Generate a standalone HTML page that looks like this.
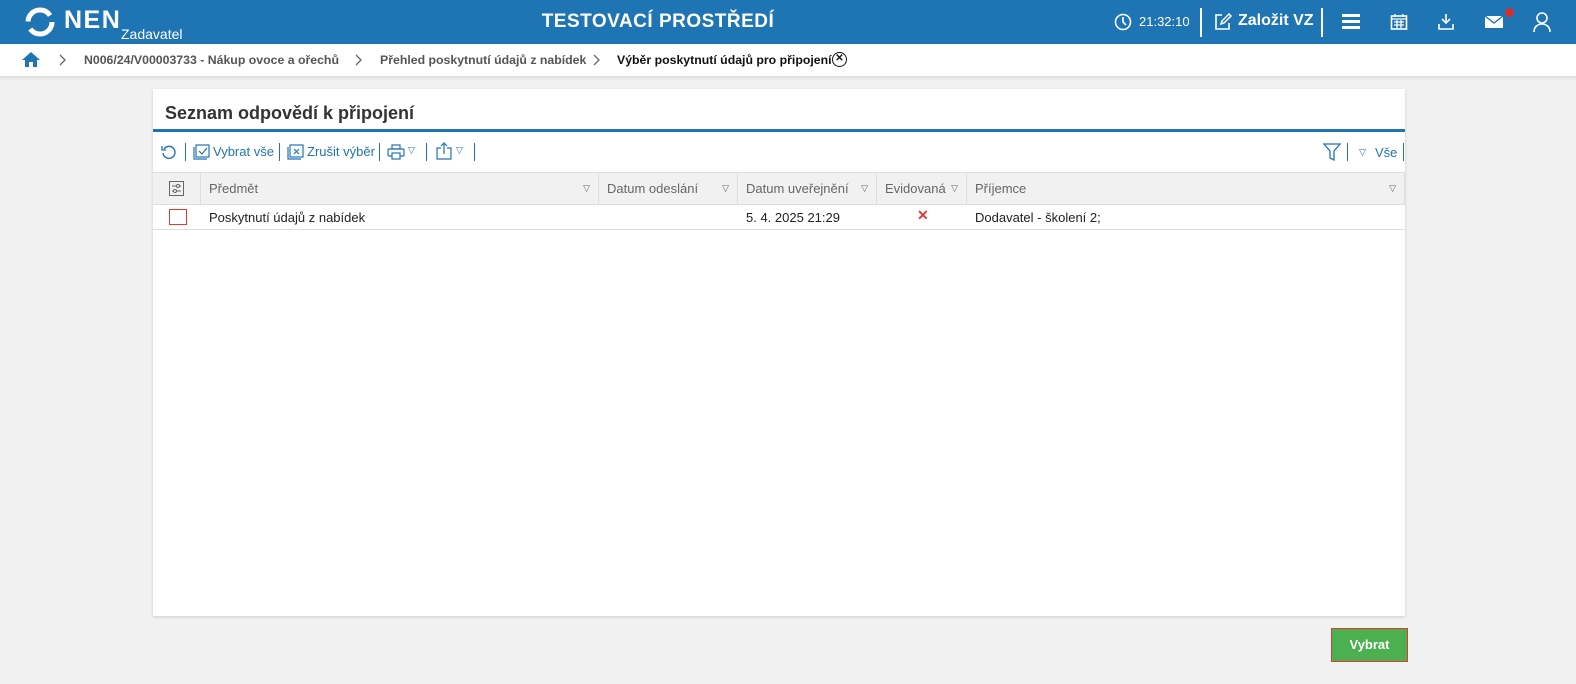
<!DOCTYPE html>
<html><head><meta charset="utf-8"><style>
*{box-sizing:border-box;margin:0;padding:0}
body{width:1576px;height:684px;background:#f1f1f1;font-family:"Liberation Sans",Arial,sans-serif;position:relative;overflow:hidden;font-size:13px;color:#222}
.top{position:absolute;left:0;top:0;width:1576px;height:44px;background:#1f75b4;color:#fff}
.bc{position:absolute;left:0;top:44px;width:1576px;height:32px;background:#fff;box-shadow:0 2px 3px rgba(0,0,0,.1);font-size:12.3px;font-weight:bold;color:#555}
.abs{position:absolute}
.panel{position:absolute;left:153px;top:89px;width:1252px;height:527px;background:#fff;box-shadow:0 1px 3px rgba(0,0,0,.15)}
.tb{color:#1f75b4;font-size:13px}
.sep{position:absolute;width:1px;height:18px;background:#1f75b4}
.th{position:absolute;top:83px;height:33px;background:#f1f1f1;border-right:1px solid #ddd;border-top:1px solid #ddd;border-bottom:1px solid #ddd;color:#666;font-size:13px;line-height:31px;padding-left:8px}
.tri{position:absolute;right:8px;top:0;font-size:9px;color:#666}
</style></head><body>
<div class="top">
 <svg class="abs" style="left:24px;top:7px" width="32" height="30" viewBox="0 0 32 30"><circle cx="16" cy="15" r="12" fill="none" stroke="#fff" stroke-width="5" stroke-dasharray="30 8"/></svg>
 <div class="abs" style="left:64px;top:6px;font-size:25px;font-weight:bold;letter-spacing:1.5px">NEN</div>
 <div class="abs" style="left:121px;top:26px;font-size:14px">Zadavatel</div>
 <div class="abs" style="left:0;width:1316px;text-align:center;top:11px;font-size:19px;font-weight:bold;letter-spacing:.5px">TESTOVACÍ PROSTŘEDÍ</div>
 <svg class="abs" style="left:1114px;top:13px" width="18" height="18" viewBox="0 0 18 18"><circle cx="9" cy="9" r="7.5" fill="none" stroke="#fff" stroke-width="1.6"/><path d="M9 4v5l3 3" fill="none" stroke="#fff" stroke-width="1.6"/></svg>
 <div class="abs" style="left:1139px;top:14px;font-size:13px">21:32:10</div>
 <div class="abs" style="left:1200px;top:8px;width:2px;height:29px;background:#fff"></div>
 <svg class="abs" style="left:1213px;top:12px" width="20" height="20" viewBox="0 0 20 20"><path d="M9 3H3v14h13v-6" fill="none" stroke="#fff" stroke-width="1.6"/><path d="M8 12l1-3 7-7 2 2-7 7z" fill="none" stroke="#fff" stroke-width="1.5"/></svg>
 <div class="abs" style="left:1238px;top:12px;font-size:16px;font-weight:bold">Založit VZ</div>
 <div class="abs" style="left:1321px;top:8px;width:2px;height:29px;background:#fff"></div>
 <div class="abs" style="left:1342px;top:14px;width:18px;height:3px;background:#fff;box-shadow:0 6px 0 #fff,0 12px 0 #fff"></div>
 <svg class="abs" style="left:1390px;top:13px" width="18" height="18" viewBox="0 0 18 18"><rect x="1.5" y="3" width="15" height="13" fill="none" stroke="#fff" stroke-width="1.6"/><path d="M1.5 6h15M5 1v3M13 1v3M4 9h10M4 12h10M7 7v8M11 7v8" stroke="#fff" stroke-width="1.3"/></svg>
 <svg class="abs" style="left:1437px;top:12px" width="18" height="20" viewBox="0 0 18 20"><path d="M9 2v9M5 7l4 4 4-4M2 12v5h14v-5" fill="none" stroke="#fff" stroke-width="1.6"/></svg>
 <svg class="abs" style="left:1485px;top:15px" width="18" height="14" viewBox="0 0 18 14"><rect x="0" y="1" width="18" height="12" fill="#fff"/><path d="M0 1l9 7 9-7" fill="none" stroke="#1f75b4" stroke-width="1.4"/></svg>
 <div class="abs" style="left:1505px;top:8px;width:9px;height:9px;border-radius:50%;background:#d32f2f"></div>
 <svg class="abs" style="left:1533px;top:11px" width="18" height="22" viewBox="0 0 18 22"><circle cx="9" cy="7" r="5" fill="none" stroke="#fff" stroke-width="1.6"/><path d="M1 21c0-5 3.5-8 8-8s8 3 8 8" fill="none" stroke="#fff" stroke-width="1.6"/></svg>
</div>
<div class="bc">
 <svg class="abs" style="left:22px;top:7px" width="18" height="17" viewBox="0 0 18 17"><path d="M9 1L0 9h3v7h4v-5h4v5h4V9h3z" fill="#1f75b4"/></svg>
 <svg class="abs" style="left:59px;top:10px" width="8" height="12" viewBox="0 0 8 12"><path d="M1 1l5 5-5 5" fill="none" stroke="#666" stroke-width="1.3"/></svg>
 <div class="abs" style="left:84px;top:9px;white-space:nowrap">N006/24/V00003733 - Nákup ovoce a ořechů</div>
 <svg class="abs" style="left:355px;top:10px" width="8" height="12" viewBox="0 0 8 12"><path d="M1 1l5 5-5 5" fill="none" stroke="#666" stroke-width="1.3"/></svg>
 <div class="abs" style="left:380px;top:9px;white-space:nowrap">Přehled poskytnutí údajů z nabídek</div>
 <svg class="abs" style="left:593px;top:10px" width="8" height="12" viewBox="0 0 8 12"><path d="M1 1l5 5-5 5" fill="none" stroke="#666" stroke-width="1.3"/></svg>
 <div class="abs" style="left:617px;top:9px;color:#111;white-space:nowrap">Výběr poskytnutí údajů pro připojení</div>
 <div class="abs" style="left:832px;top:8px;width:15px;height:15px;border:1.5px solid #111;border-radius:50%;font-size:10px;line-height:12px;text-align:center;color:#111">✕</div>
</div>
<div class="panel">
 <div class="abs" style="left:12px;top:14px;font-size:18px;font-weight:bold;color:#333">Seznam odpovědí k připojení</div>
 <div class="abs" style="left:0;top:40px;width:1252px;height:3px;background:#1f75b4"></div>
 <div class="tb">
  <svg class="abs" style="left:8px;top:55px" width="16" height="16" viewBox="0 0 16 16"><path d="M3 5A6 6 0 1 1 2 9" fill="none" stroke="#1f75b4" stroke-width="1.4"/><path d="M1 2v4h4" fill="none" stroke="#1f75b4" stroke-width="1.3"/></svg>
  <div class="sep" style="left:32px;top:54px"></div>
  <svg class="abs" style="left:40px;top:55px" width="17" height="16" viewBox="0 0 17 16"><rect x="3" y="1" width="13" height="12" fill="none" stroke="#1f75b4" stroke-width="1.2"/><path d="M1 3v12h13" fill="none" stroke="#1f75b4" stroke-width="1.2"/><path d="M6 7l3 3 5-6" fill="none" stroke="#1f75b4" stroke-width="1.2"/></svg>
  <div class="abs" style="left:60px;top:55px">Vybrat vše</div>
  <div class="sep" style="left:126px;top:54px"></div>
  <svg class="abs" style="left:134px;top:55px" width="17" height="16" viewBox="0 0 17 16"><rect x="3" y="1" width="13" height="12" fill="none" stroke="#1f75b4" stroke-width="1.2"/><path d="M1 3v12h13" fill="none" stroke="#1f75b4" stroke-width="1.2"/><path d="M7 5l5 5M12 5l-5 5" stroke="#1f75b4" stroke-width="1.2"/></svg>
  <div class="abs" style="left:154px;top:55px">Zrušit výběr</div>
  <div class="sep" style="left:226px;top:54px"></div>
  <svg class="abs" style="left:234px;top:55px" width="18" height="16" viewBox="0 0 18 16"><rect x="5" y="1" width="8" height="4" fill="none" stroke="#1f75b4" stroke-width="1.2"/><rect x="1" y="5" width="16" height="7" rx="1" fill="none" stroke="#1f75b4" stroke-width="1.2"/><rect x="5" y="9" width="8" height="6" fill="#fff" stroke="#1f75b4" stroke-width="1.2"/></svg>
  <div class="abs" style="left:255px;top:56px;font-size:9px">▽</div>
  <div class="sep" style="left:273px;top:54px"></div>
  <svg class="abs" style="left:283px;top:53px" width="16" height="18" viewBox="0 0 16 18"><path d="M5 6H1v11h14V6h-4M8 12V1M5 4l3-3 3 3" fill="none" stroke="#1f75b4" stroke-width="1.2"/></svg>
  <div class="abs" style="left:303px;top:56px;font-size:9px">▽</div>
  <div class="sep" style="left:321px;top:54px"></div>
  <svg class="abs" style="left:1170px;top:54px" width="18" height="18" viewBox="0 0 18 18"><path d="M1 1h16l-6 7v9l-4-2V8z" fill="none" stroke="#1f75b4" stroke-width="1.3"/></svg>
  <div class="sep" style="left:1194px;top:54px"></div>
  <div class="abs" style="left:1206px;top:58px;font-size:9px">▽</div>
  <div class="abs" style="left:1222px;top:56px">Vše</div>
  <div class="sep" style="left:1250px;top:54px"></div>
 </div>
 <div class="th" style="left:0;width:48px;padding:0"><svg class="abs" style="left:16px;top:8px" width="15" height="15" viewBox="0 0 15 15"><rect x=".5" y=".5" width="14" height="14" fill="none" stroke="#666"/><path d="M3 5h9M3 10h9" stroke="#666"/><circle cx="9" cy="5" r="1.5" fill="#fff" stroke="#666"/><circle cx="6" cy="10" r="1.5" fill="#fff" stroke="#666"/></svg></div>
 <div class="th" style="left:48px;width:398px">Předmět<span class="tri">▽</span></div>
 <div class="th" style="left:446px;width:139px">Datum odeslání<span class="tri">▽</span></div>
 <div class="th" style="left:585px;width:139px">Datum uveřejnění<span class="tri">▽</span></div>
 <div class="th" style="left:724px;width:90px">Evidovaná<span class="tri">▽</span></div>
 <div class="th" style="left:814px;width:438px">Příjemce<span class="tri">▽</span></div>
 <div class="abs" style="left:0;top:116px;width:1252px;height:25px;border-bottom:1px solid #ddd"></div>
 <div class="abs" style="left:16px;top:120px;width:18px;height:16px;border:1.5px solid #e53935"></div>
 <div class="abs" style="left:56px;top:121px">Poskytnutí údajů z nabídek</div>
 <div class="abs" style="left:593px;top:121px">5. 4. 2025 21:29</div>
 <div class="abs" style="left:764px;top:118px;color:#e53935;font-weight:bold;font-size:14px">✕</div>
 <div class="abs" style="left:822px;top:121px">Dodavatel - školení 2;</div>
</div>
<div class="abs" style="left:1331px;top:628px;width:77px;height:34px;background:#4caf50;border:1px solid #e53935;color:#fff;font-weight:bold;font-size:13px;text-align:center;line-height:32px">Vybrat</div>
</body></html>
